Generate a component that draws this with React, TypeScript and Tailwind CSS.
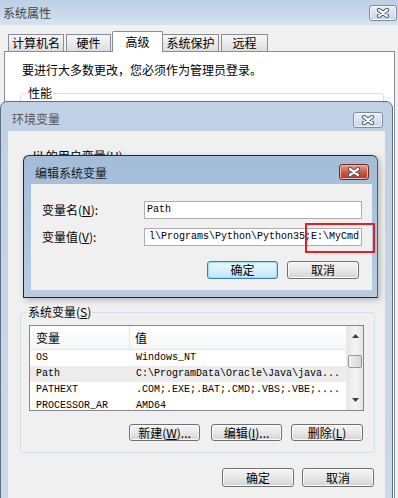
import React from 'react';

function CloseGlyph() {
  return (
    <svg width="14" height="10" viewBox="0 0 14 10">
      <path d="M3 2 L11 8 M11 2 L3 8" stroke="#4a5566" strokeWidth="4.2" strokeLinecap="round" />
      <path d="M3 2 L11 8 M11 2 L3 8" stroke="#ffffff" strokeWidth="2.2" strokeLinecap="round" />
    </svg>
  );
}

function CloseBtn({ className, red }: { className: string; red?: boolean }) {
  return red ? (
    <div
      className={`flex items-center justify-center rounded-[3px] border border-[#6e2a22] bg-linear-to-b from-[#e6a193] via-[#c95a48] to-[#b33a26] shadow-[inset_0_0_0_1px_#f0b4a8] ${className}`}
    >
      <CloseGlyph />
    </div>
  ) : (
    <div
      className={`flex items-center justify-center rounded-[3px] border border-[#7b8a9c] bg-linear-to-b from-[#e8eef6] to-[#c9d6e6] shadow-[inset_0_0_0_1px_#f4f7fb] ${className}`}
    >
      <CloseGlyph />
    </div>
  );
}

function Tab({ label, className, active }: { label: string; className: string; active?: boolean }) {
  return active ? (
    <div
      className={`relative z-10 -mb-px h-[21px] flex items-center justify-center border border-b-0 border-[#898c95] bg-white rounded-t-[2px] ${className}`}
    >
      {label}
    </div>
  ) : (
    <div
      className={`h-[17px] flex items-center justify-center border border-b-0 border-[#898c95] bg-linear-to-b from-[#f7f7f7] to-[#dedede] ${className}`}
    >
      {label}
    </div>
  );
}

function Btn({
  children,
  className,
  def,
}: {
  children: React.ReactNode;
  className: string;
  def?: boolean;
}) {
  return def ? (
    <div
      className={`flex items-center justify-center rounded-[3px] border border-[#3c7fb1] bg-linear-to-b from-[#eaf6fd] via-[#d9f0fc] to-[#bee6fd] shadow-[inset_0_0_0_1px_#9fdcf7] ${className}`}
    >
      {children}
    </div>
  ) : (
    <div
      className={`flex items-center justify-center rounded-[3px] border border-[#707070] bg-linear-to-b from-[#f4f4f4] via-[#e8e8e8] to-[#d3d3d3] shadow-[inset_0_0_0_1px_#fbfbfb] ${className}`}
    >
      {children}
    </div>
  );
}

const rows = [
  ['OS', 'Windows_NT'],
  ['Path', 'C:\\ProgramData\\Oracle\\Java\\java...'],
  ['PATHEXT', '.COM;.EXE;.BAT;.CMD;.VBS;.VBE;....'],
  ['PROCESSOR_AR', 'AMD64'],
];

export default function App() {
  return (
    <div className="relative w-[398px] h-[498px] overflow-hidden bg-[#f0f0f0] text-[12px] leading-[14px] text-black font-['Noto_Sans_CJK_SC',sans-serif]">
      {/* 系统属性 */}
      <div className="flex h-[25px] bg-linear-to-b from-[#bccfe5] to-[#d5e2f0]">
        <span className="pl-[3px] pt-[6px] text-[#444]">系统属性</span>
        <CloseBtn className="ml-auto mt-[5px] mr-[1px] w-[28px] h-[16px]" />
      </div>
      <div className="flex items-end h-[26px] pl-[8px]">
        <Tab label="计算机名" className="w-[56px]" />
        <Tab label="硬件" className="ml-[2px] w-[45px]" />
        <Tab label="高级" className="ml-[1px] w-[51px]" active />
        <Tab label="系统保护" className="-ml-px w-[57px]" />
        <Tab label="远程" className="ml-[2px] w-[47px]" />
      </div>
      <div className="ml-[4px] w-[391px] h-[460px] bg-white border border-[#898c95] pt-[11px]">
        <p className="pl-[17px]">要进行大多数更改，您必须作为管理员登录。</p>
        <fieldset className="mt-[9px] ml-[15px] mr-[10px] h-[120px] border border-[#d5dfe5] rounded-[3px] px-[8px]">
          <legend className="-ml-[2px] px-[1px]">性能</legend>
        </fieldset>
      </div>

      {/* 环境变量 */}
      <div className="absolute left-0 top-[101px] w-[393px] h-[410px] flex flex-col rounded-t-[7px] border border-[#5f7084] bg-linear-to-b from-[#c0d1e5] to-[#cbd9e9]">
        <div className="flex h-[29px] shrink-0">
          <span className="pl-[11px] pt-[10px] text-[#555]">环境变量</span>
          <CloseBtn className="ml-auto mt-[10px] mr-[9px] w-[30px] h-[16px]" />
        </div>
        <div className="ml-[7px] w-[377px] flex-1 bg-[#f0f0f0]">
          <div className="h-[174px] pt-[18px] pl-[25px]">lil 的用户变量(<span className="underline">U</span>)</div>
          <fieldset className="ml-[12px] mr-[10px] border border-[#d5dfe5] rounded-[3px] pl-[8px] pr-[10px] pb-[11px]">
            <legend className="-ml-[2px] px-[1px] leading-[14px]">
              系统变量(<span className="underline">S</span>)
            </legend>
            <div className="mt-[6px] h-[86px] flex border border-[#828790] bg-white">
              <div className="flex-1 min-w-0 flex flex-col overflow-hidden">
                <div className="flex h-[24px] shrink-0 border-b border-[#e5e5e5] bg-linear-to-b from-white to-[#f6f7f9]">
                  <div className="w-[100px] flex items-center pl-[6px] border-r border-[#e5e5e5]">变量</div>
                  <div className="flex items-center pl-[5px]">值</div>
                </div>
                {rows.map(([k, v], i) => (
                  <div
                    key={k}
                    className={`flex h-[16px] shrink-0 items-center whitespace-nowrap text-[10px] font-['Liberation_Mono',monospace] ${
                      i === 1 ? 'bg-[#ececec]' : ''
                    }`}
                  >
                    <div className="w-[100px] pl-[6px] overflow-hidden">{k}</div>
                    <div className="pl-[6px]">{v}</div>
                  </div>
                ))}
              </div>
              <div className="w-[17px] flex flex-col bg-linear-to-r from-[#e6e6e6] via-[#f4f4f4] to-[#e6e6e6] border-l border-[#ececec]">
                <div className="h-[20px] flex items-center justify-center">
                  <svg width="7" height="4" viewBox="0 0 7 4">
                    <path d="M0 4 L3.5 0 L7 4 Z" fill="#404040" />
                  </svg>
                </div>
                <div className="mt-[9px] mx-[1px] h-[13px] rounded-[2px] border border-[#979797] bg-linear-to-r from-[#f2f2f2] to-[#d6d6d6]" />
                <div className="mt-auto h-[20px] flex items-center justify-center">
                  <svg width="7" height="4" viewBox="0 0 7 4">
                    <path d="M0 0 L7 0 L3.5 4 Z" fill="#404040" />
                  </svg>
                </div>
              </div>
            </div>
            <div className="mt-[13px] flex justify-end">
              <Btn className="w-[71px] h-[17px]">
                新建(<span className="underline">W</span>)...
              </Btn>
              <Btn className="ml-[11px] w-[71px] h-[17px]">
                编辑(<span className="underline">I</span>)...
              </Btn>
              <Btn className="ml-[9px] mr-[1px] w-[72px] h-[17px]">
                删除(<span className="underline">L</span>)
              </Btn>
            </div>
          </fieldset>
          <div className="mt-[15px] mr-[11px] flex justify-end gap-[8px]">
            <Btn className="w-[72px] h-[19px]">确定</Btn>
            <Btn className="w-[72px] h-[19px]">取消</Btn>
          </div>
        </div>
      </div>

      {/* 编辑系统变量 */}
      <div className="absolute left-[23px] top-[155px] w-[355px] h-[143px] flex flex-col rounded-t-[6px] border border-[#1f2a36] border-r-[#2c6c7c] bg-linear-to-b from-[#a3bcd8] to-[#b8cce2] shadow-[2px_2px_6px_rgba(0,0,0,0.25)]">
        <div className="flex h-[28px] shrink-0">
          <span className="pl-[11px] pt-[10px] text-[#1a1a1a]">编辑系统变量</span>
          <CloseBtn red className="ml-auto mt-[8px] mr-[8px] w-[30px] h-[16px]" />
        </div>
        <div className="ml-[7px] w-[341px] h-[106px] bg-[#f0f0f0]">
          <div className="mt-[17px] flex items-center h-[18px]">
            <div className="w-[113px] shrink-0 pl-[11px]">
              变量名(<span className="underline">N</span>):
            </div>
            <div className="w-[218px] h-[18px] flex items-center border border-[#abadb3] bg-white px-[2px] text-[10px] font-['Liberation_Mono',monospace]">
              Path
            </div>
          </div>
          <div className="mt-[9px] flex items-center h-[18px]">
            <div className="w-[113px] shrink-0 pl-[11px]">
              变量值(<span className="underline">V</span>):
            </div>
            <div className="w-[218px] h-[18px] flex items-center justify-end whitespace-nowrap border border-[#abadb3] bg-white pr-[2px] text-[10px] font-['Liberation_Mono',monospace]">
              l\Programs\Python\Python35;E:\MyCmd
            </div>
          </div>
          <div className="mt-[15px] pr-[13px] flex justify-end gap-[9px]">
            <Btn def className="w-[71px] h-[18px]">确定</Btn>
            <Btn className="w-[72px] h-[18px]">取消</Btn>
          </div>
        </div>
      </div>

      {/* annotation */}
      <div className="absolute left-[305px] top-[223px] w-[70px] h-[30px] border-2 border-[#e81e25]" />
    </div>
  );
}
